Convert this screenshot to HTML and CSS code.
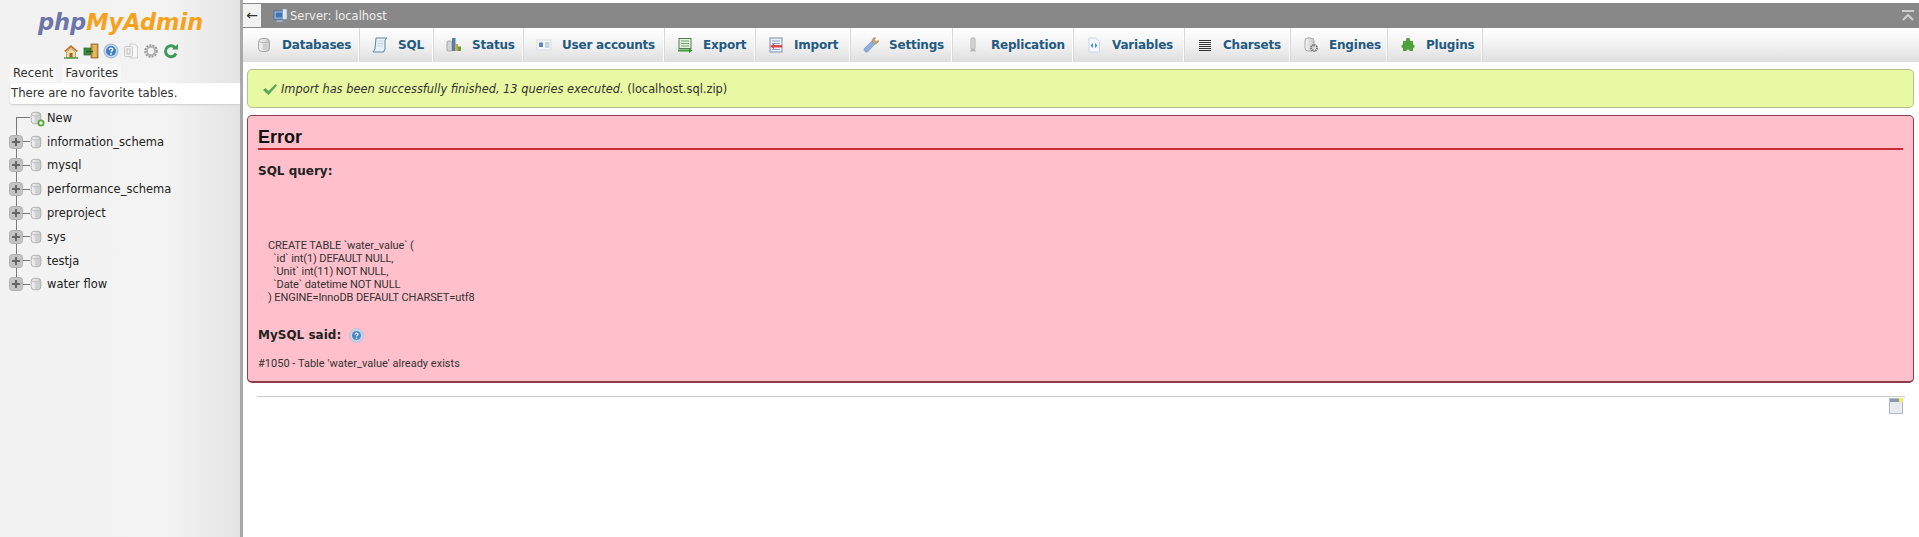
FILE: index.html
```html
<!DOCTYPE html>
<html lang="en">
<head>
<meta charset="utf-8">
<title>phpMyAdmin</title>
<link rel="stylesheet" href="styles.css">
</head>
<body>
<svg class="defs" width="0" height="0" aria-hidden="true">
  <defs>
    <linearGradient id="dbg" x1="0" x2="1" y1="0" y2="0"><stop offset="0" stop-color="#f4f4f4"/><stop offset="1" stop-color="#c9c9c9"/></linearGradient>
    <symbol id="db" viewBox="0 0 16 16"><rect x="2.5" y="1.5" width="11" height="13" rx="3.5" fill="url(#dbg)" stroke="#a9a9a9"/><path d="M3 4.5c2 1.6 8 1.6 10 0" fill="none" stroke="#b5b5b5"/><rect x="7" y="6.5" width="5" height="6.5" rx="1" fill="#cfcfcf"/></symbol>
    <symbol id="expand" viewBox="0 0 14 14"><rect x=".5" y=".5" width="13" height="13" rx="3" fill="#c3c3c3" stroke="#b0b0b0"/><path d="M7 3v8M3 7h8" stroke="#666" stroke-width="2"/></symbol>
  </defs>
</svg>
<div class="app">
  <aside class="sidebar">
    <div class="logo"><span class="logo-php">php</span><span class="logo-my">MyAdmin</span></div>
    <div class="quick">
      <svg class="qi" viewBox="0 0 16 16"><path d="M1 8 8 2l7 6-1.500 1L8 4.500 2.500 9z" fill="#c8752a"/><path d="M3.500 9 8 5.500 12.500 9v5.500h-9z" fill="#f0dca8" stroke="#9c7a3c" stroke-width=".6"/><rect x="6.500" y="10" width="3" height="4.500" fill="#a5622a"/><path d="M1 15h14" stroke="#4f9a3c" stroke-width="1.500"/></svg>
      <svg class="qi" viewBox="0 0 16 16"><rect x="8" y="1" width="7" height="14" fill="#c89a4a" stroke="#7f5f25" stroke-width=".7"/><rect x="10" y="2" width="3.500" height="12" fill="#e8b75c"/><rect x="1" y="5" width="6.500" height="7" fill="#3f8e3c" stroke="#1f5a22" stroke-width=".7"/><path d="M3 8.500h7" stroke="#1f5a22" stroke-width="1.500"/></svg>
      <svg class="qi" viewBox="0 0 16 16"><circle cx="8" cy="8" r="7" fill="#c5d8ee" stroke="#9ab4d2"/><circle cx="8" cy="8" r="5" fill="#3f7fc4"/><path d="M6.300 6.800c0-2.200 3.500-2.200 3.500-.2 0 1.300-1.800 1.300-1.800 2.700" fill="none" stroke="#fff" stroke-width="1.300"/><circle cx="8" cy="11" r=".9" fill="#fff"/></svg>
      <svg class="qi" viewBox="0 0 16 16"><path d="M7 1h5l2.500 3v11H7z" fill="#f8f8f8" stroke="#cfcfcf"/><rect x="1.500" y="3.500" width="8" height="10" rx="1" fill="#f2f2f2" stroke="#c9c9c9"/><rect x="4" y="6" width="3" height="5" fill="none" stroke="#c0c0c0"/></svg>
      <svg class="qi" viewBox="0 0 16 16"><circle cx="8" cy="8" r="5.200" fill="none" stroke="#9a9a9a" stroke-width="3.200" stroke-dasharray="1.800 1"/><circle cx="8" cy="8" r="4.200" fill="none" stroke="#b4b4b4" stroke-width="2"/><circle cx="8" cy="8" r="2" fill="#f0f0f0"/></svg>
      <svg class="qi" viewBox="0 0 16 16"><path d="M12.800 5.500A5.500 5.500 0 1 0 13 10.500" fill="none" stroke="#3d9a58" stroke-width="3"/><path d="M9 6.500h6V1z" fill="#3d9a58"/></svg>
    </div>
    <div class="side-tabs"><span class="side-tab">Recent</span><span class="side-tab">Favorites</span></div>
    <div class="fav-box">There are no favorite tables.</div>
    <ul class="tree">
      <li class="tree-row"><span class="exp-slot"></span><span class="stub"></span><span class="db-wrap"><svg class="db-icon"><use href="#db"/></svg><svg class="plus-badge" viewBox="0 0 8 8"><circle cx="4" cy="4" r="3.500" fill="#5ea83c"/><circle cx="4" cy="4" r="1.700" fill="#e9f5df"/></svg></span><span class="db-name">New</span></li>
      <li class="tree-row"><svg class="exp"><use href="#expand"/></svg><span class="stub"></span><svg class="db-icon"><use href="#db"/></svg><span class="db-name">information_schema</span></li>
      <li class="tree-row"><svg class="exp"><use href="#expand"/></svg><span class="stub"></span><svg class="db-icon"><use href="#db"/></svg><span class="db-name">mysql</span></li>
      <li class="tree-row"><svg class="exp"><use href="#expand"/></svg><span class="stub"></span><svg class="db-icon"><use href="#db"/></svg><span class="db-name">performance_schema</span></li>
      <li class="tree-row"><svg class="exp"><use href="#expand"/></svg><span class="stub"></span><svg class="db-icon"><use href="#db"/></svg><span class="db-name">preproject</span></li>
      <li class="tree-row"><svg class="exp"><use href="#expand"/></svg><span class="stub"></span><svg class="db-icon"><use href="#db"/></svg><span class="db-name">sys</span></li>
      <li class="tree-row"><svg class="exp"><use href="#expand"/></svg><span class="stub"></span><svg class="db-icon"><use href="#db"/></svg><span class="db-name">testja</span></li>
      <li class="tree-row"><svg class="exp"><use href="#expand"/></svg><span class="stub"></span><svg class="db-icon"><use href="#db"/></svg><span class="db-name">water flow</span></li>
    </ul>
  </aside>
  <main class="main">
    <div class="topbar">
      <span class="back">←</span>
      <svg class="server-icon" viewBox="0 0 16 16"><rect x="1" y="3" width="11" height="9" fill="#8fb3dc" stroke="#4f6f9c"/><rect x="3" y="5" width="7" height="5" fill="#3f72b4"/><rect x="10" y="1" width="5" height="11" fill="#dfe6f0" stroke="#7f8ea4" stroke-width=".7"/><path d="M4 14h6" stroke="#9fb4cc" stroke-width="2"/></svg>
      <span class="server-label">Server: localhost</span>
      <svg class="collapse" viewBox="0 0 12 12"><path d="M0 1h12M1 10l5-5 5 5" fill="none" stroke="#cfcfcf" stroke-width="2"/></svg>
    </div>
    <nav class="tabs">
      <a class="tab"><svg class="tab-icon"><use href="#db"/></svg>Databases</a>
      <a class="tab"><svg class="tab-icon" viewBox="0 0 16 16"><path d="M4 1h11l-2 2v9l-1.500 3H1l2-3z" fill="#e8f0f8" stroke="#5f83a8"/><path d="M5.500 4h6M5.500 6.500h6M5 9h6" stroke="#c4d4e4"/></svg>SQL</a>
      <a class="tab"><svg class="tab-icon" viewBox="0 0 16 16"><rect x="1" y="4" width="5" height="10" rx="1.500" fill="#d5d5d5" stroke="#a4a4a4"/><rect x="6" y="1" width="3.500" height="13" fill="#4f7fb0"/><rect x="9.500" y="7" width="2.500" height="7" fill="#d9a030"/><rect x="12" y="9.500" width="3" height="4.500" fill="#58a040"/></svg>Status</a>
      <a class="tab"><svg class="tab-icon" viewBox="0 0 16 16"><rect x="1" y="3" width="14" height="10" fill="#f4f6f9" stroke="#d8dde4"/><rect x="3" y="5.500" width="4" height="4.500" fill="#5f86b8"/><path d="M9 6h4.500M9 8h4.500M9 10h4.500" stroke="#9cb0c8"/></svg>User accounts</a>
      <a class="tab"><svg class="tab-icon" viewBox="0 0 16 16"><rect x="2" y="1.500" width="12" height="10" fill="#e8f2e4" stroke="#4f7f4c"/><path d="M4 4h8M4 6.500h8M4 9h8" stroke="#6f9f6c"/><path d="M1 13.500h11" stroke="#3d9a3c" stroke-width="2"/><path d="M12 11l3.500 2.500L12 16z" fill="#3d8a3c"/></svg>Export</a>
      <a class="tab"><svg class="tab-icon" viewBox="0 0 16 16"><rect x="2" y="1" width="12" height="14" fill="#eef2f8" stroke="#7a8eb0"/><path d="M4 4h8M4 6.500h8M4 12.500h8" stroke="#8fa4c4"/><rect x="5" y="8" width="9" height="2.500" fill="#d8484c"/><path d="M6 6.500 2 9.200l4 2.800z" fill="#d8484c"/></svg>Import</a>
      <a class="tab"><svg class="tab-icon" viewBox="0 0 16 16"><path d="M2 14.500c-1.500-1-1.200-2.500-.3-3.500L9 4l3 3-7 7.500c-1 .8-2 .8-3 0z" fill="#8fb0dc" stroke="#6f8fba" stroke-width=".6"/><path d="M9 4c0-2 1.500-3.500 3.500-3.500l-1 2.500 1.500 1.500 2.500-1C15.500 5.500 14 7 12 7z" fill="#c9a878" stroke="#94784f" stroke-width=".5"/></svg>Settings</a>
      <a class="tab"><svg class="tab-icon" viewBox="0 0 16 16"><rect x="6" y="1" width="4" height="11" rx="1" fill="#e2e2e2" stroke="#b2b2b2"/><path d="M8 2v9" stroke="#c4c4c4"/><path d="M5 14.500h6l-1-2.500H6z" fill="#b9b9b9"/></svg>Replication</a>
      <a class="tab"><svg class="tab-icon" viewBox="0 0 16 16"><path d="M3 1h7l3.500 3.500V15H3z" fill="#f4f8fc" stroke="#c5d6e6"/><path d="M7 6 4.500 8.500 7 11zM9 6l2.500 2.500L9 11z" fill="#3f90d0"/></svg>Variables</a>
      <a class="tab"><svg class="tab-icon charset-icon" viewBox="0 0 16 16"><path d="M2 3.500h12M2 5.500h12M2 7.500h12M2 9.500h12M2 11.500h12M2 13.500h12" stroke="#333"/></svg>Charsets</a>
      <a class="tab"><svg class="tab-icon" viewBox="0 0 16 16"><rect x="2" y="1" width="9" height="13" rx="3" fill="url(#dbg)" stroke="#a9a9a9"/><circle cx="11" cy="11" r="3" fill="none" stroke="#777" stroke-width="2" stroke-dasharray="1.300 .7"/><circle cx="11" cy="11" r="1.200" fill="#e0e0e0"/></svg>Engines</a>
      <a class="tab"><svg class="tab-icon" viewBox="0 0 16 16"><path d="M6 2.500c0-2 4-2 4 0V4h3v3.500c2 0 2 3.500 0 3.500v3H9.500c0-2-3-2-3 0H3v-3c-2 0-2-3.500 0-3.500V4h3z" fill="#4fa03c"/></svg>Plugins</a>
    </nav>
    <section class="content">
      <div class="notice"><svg class="check" viewBox="0 0 16 16"><path d="M1 9l2.500-2 3 3L13.500 3 15 4.500 6.500 14z" fill="#58a858"/></svg><span><em>Import has been successfully finished, 13 queries executed.</em> (localhost.sql.zip)</span></div>
      <div class="error">
        <h1 class="error-title">Error</h1>
        <p class="label label-sql">SQL query:</p>
        <pre class="query">CREATE TABLE `water_value` (
  `id` int(1) DEFAULT NULL,
  `Unit` int(11) NOT NULL,
  `Date` datetime NOT NULL
) ENGINE=InnoDB DEFAULT CHARSET=utf8</pre>
        <p class="label label-said">MySQL said: <svg class="help" viewBox="0 0 16 16"><circle cx="8" cy="8" r="7.300" fill="#c5d8ee" stroke="#a8bfd8"/><circle cx="8" cy="8" r="4.800" fill="#4a86c4"/><path d="M6.500 6.900c0-1.900 3.100-1.900 3.100-.2 0 1.200-1.600 1.200-1.600 2.400" fill="none" stroke="#fff" stroke-width="1.200"/><circle cx="8" cy="10.800" r=".8" fill="#fff"/></svg></p>
        <p class="message">#1050 - Table 'water_value' already exists</p>
      </div>
      <hr class="rule">
      <div class="console-row"><svg class="console" viewBox="0 0 14 16"><rect x=".5" y=".5" width="13" height="15" fill="#e6eaee" stroke="#b4bac2"/><rect x="1" y="1" width="12" height="3" fill="#8c98b0"/><rect x="10" y="0" width="4" height="4" fill="#f4ee5c"/></svg></div>
    </section>
  </main>
</div>
</body>
</html>
```

FILE: styles.css
```css
* { box-sizing: border-box; }
html, body { margin: 0; height: 100%; }
body {
  background: #fff;
  color: #222;
  font-family: "DejaVu Sans", sans-serif;
  overflow: hidden;
}
.defs { display: block; height: 0; }
.app { display: flex; height: 537px; }

.sidebar {
  width: 243px;
  flex: none;
  border-right: 3px solid #a8a8a8;
  background: linear-gradient(to right, #f2f2f2 0%, #f3f3f3 70%, #e4e4e4 100%);
  padding-top: 8px;
}
.logo {
  height: 29px;
  padding-left: 38px;
  font: italic bold 22.500px/29px "DejaVu Sans", sans-serif;
  white-space: nowrap;
}
.logo-php { color: #6c75a8; }
.logo-my { color: #f6a21c; }
.quick {
  display: flex;
  align-items: center;
  gap: 4px;
  height: 16px;
  margin-top: 6px;
  padding-left: 63px;
}
.qi { width: 16px; height: 16px; flex: none; }
.side-tabs {
  display: flex;
  gap: 6px;
  margin-top: 5px;
  padding-left: 10px;
}
.side-tab {
  height: 18px;
  padding: 0 3px;
  background: #f8f8f8;
  border-radius: 3px 3px 0 0;
  font-size: 11.700px;
  line-height: 18px;
  color: #333;
}
.fav-box {
  height: 21px;
  margin: 1px 0 0 10px;
  padding-left: 1px;
  background: #fff;
  border-radius: 3px 0 0 3px;
  box-shadow: 0 1px 2px #ccc;
  font-size: 11.700px;
  line-height: 20px;
  color: #333;
}
.tree {
  position: relative;
  list-style: none;
  margin: 0;
  padding: 2px 0 0 9px;
}
.tree::before {
  content: "";
  position: absolute;
  left: 16px;
  top: 14px;
  bottom: 12px;
  width: 1px;
  background: #777;
}
.tree-row {
  display: flex;
  align-items: center;
  height: 23.800px;
  font-size: 11.500px;
  color: #222;
}
.exp-slot { background: linear-gradient(#777, #777) right center / 7px 1px no-repeat; }
.exp-slot, .exp { width: 14px; height: 14px; flex: none; position: relative; }
.stub { width: 7px; height: 1px; flex: none; background: #777; }
.db-wrap { position: relative; display: flex; flex: none; }
.db-icon { width: 14px; height: 14px; flex: none; margin-left: -1px; }
.plus-badge { position: absolute; right: -2px; bottom: -2px; width: 8px; height: 8px; }
.db-name { margin-left: 4px; }

.main { flex: 1; min-width: 0; padding-top: 3px; background: #fff; }
.topbar {
  display: flex;
  align-items: center;
  height: 25px;
  background: #888;
  color: #fff;
  font-size: 12px;
  padding-right: 5px;
}
.back {
  width: 18px;
  height: 23px;
  background: #f2f2f2;
  color: #333;
  text-align: center;
  font-size: 14px;
  line-height: 22px;
}
.server-icon { width: 15px; height: 15px; margin-left: 12px; flex: none; }
.server-label { margin-left: 2px; color: #eee; font-size: 11.500px; }
.collapse { width: 12px; height: 12px; margin-left: auto; }

.tabs {
  display: grid;
  grid-template-columns: 116px 74px 90px 141px 91px 95px 102px 121px 111px 106px 97px 95px 1fr;
  height: 34px;
  background: linear-gradient(to bottom, #fff 0%, #f2f2f2 50%, #dedede 100%);
}
.tab {
  display: flex;
  align-items: center;
  padding-left: 13px;
  border-right: 1px solid #fff;
  box-shadow: 1px 0 0 #d8d8d8;
  font-size: 12px;
  font-weight: 700;
  color: #235a81;
  letter-spacing: -.2px;
  white-space: nowrap;
}
.tab-icon { width: 16px; height: 16px; flex: none; margin-right: 10px; }

.content { padding: 7px 5px 0 4px; }
.notice {
  display: flex;
  align-items: center;
  height: 39px;
  padding-left: 14px;
  background: #e9f8a3;
  border: 1px solid #b4c08c;
  border-radius: 5px;
  font-size: 11.400px;
  color: #333;
}
.check { width: 16px; height: 16px; margin-right: 3px; flex: none; }
.error {
  height: 268px;
  margin-top: 7px;
  padding: 12px 10px 0;
  background: #ffc0cb;
  border: 1px solid #8c3d4c;
  border-bottom-width: 2px;
  border-radius: 5px;
}
.error-title {
  margin: 0;
  height: 22px;
  border-bottom: 2px solid #cc2a34;
  font-size: 18px;
  line-height: 19px;
  font-weight: 700;
  color: #111;
  font-family: "Liberation Sans", sans-serif;
}
.label {
  margin: 0;
  display: flex;
  align-items: center;
  gap: 8px;
  height: 16px;
  font-size: 12px;
  font-weight: 700;
  color: #222;
}
.label-sql { margin-top: 13px; }
.query {
  margin: 60px 0 0 10px;
  font-family: Roboto, "Liberation Sans", sans-serif;
  font-size: 11px;
  line-height: 13px;
  letter-spacing: -.1px;
  color: #333;
}
.label-said { margin-top: 23px; }
.help { width: 15px; height: 15px; flex: none; }
.message {
  margin: 14px 0 0;
  font-family: Roboto, "Liberation Sans", sans-serif;
  font-size: 11px;
  letter-spacing: .02px;
  color: #333;
}
.rule {
  margin: 13px 9px 0 10px;
  height: 1px;
  border: 0;
  background: #ccc;
}
.console-row { display: flex; justify-content: flex-end; padding: 1px 11px 0 0; }
.console { width: 14px; height: 16px; }
```
